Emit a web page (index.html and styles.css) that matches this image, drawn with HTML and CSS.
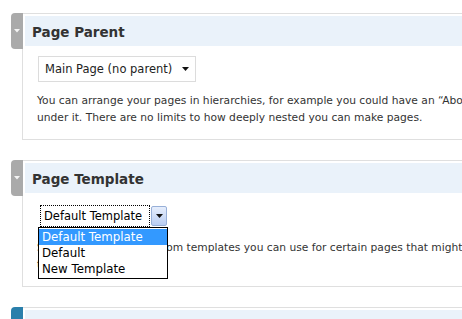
FILE: index.html
```html
<!DOCTYPE html>
<html>
<head>
<meta charset="utf-8">
<link rel="stylesheet" href="styles.css">
</head>
<body>
<div class="page">
  <div class="postbox">
    <div class="tab"><svg width="6" height="4" viewBox="0 0 6 4"><path d="M0 0H6L3 3.5Z" fill="#f4f4f4"/></svg></div>
    <h3>Page Parent</h3>
    <div class="inside">
      <div class="field">
        <div class="select">
          <span>Main Page (no parent)</span>
          <svg width="7" height="4" viewBox="0 0 7 4"><path d="M0 0H7L3.5 4Z" fill="#111"/></svg>
        </div>
      </div>
      <p>You can arrange your pages in hierarchies, for example you could have an “About” page that has “Life Story” and “My Dog” pages<br>under it. There are no limits to how deeply nested you can make pages.</p>
    </div>
  </div>

  <div class="postbox">
    <div class="tab"><svg width="6" height="4" viewBox="0 0 6 4"><path d="M0 0H6L3 3.5Z" fill="#f4f4f4"/></svg></div>
    <h3>Page Template</h3>
    <div class="inside">
      <div class="field">
        <div class="combo">
          <span class="combo-text">Default Template</span>
          <span class="combo-btn"><svg width="7" height="4" viewBox="0 0 7 4"><path d="M0 0H7L3.5 4Z" fill="#111"/></svg></span>
          <div class="list">
            <div class="item active">Default Template</div>
            <div class="item">Default</div>
            <div class="item">New Template</div>
          </div>
        </div>
      </div>
      <p>Some themes have custom templates you can use for certain pages that might have additional features or custom layouts. If so, you’ll see<br>them above.</p>
    </div>
  </div>

  <div class="postbox third">
    <div class="tab"></div>
    <h3>&nbsp;</h3>
    <div class="inside"></div>
  </div>
</div>
</body>
</html>
```

FILE: styles.css
```css
html, body {
  margin: 0;
  padding: 0;
  overflow: hidden;
  background: #fff;
}
body {
  font-family: "DejaVu Sans", sans-serif;
  color: #333;
}
.page {
  width: 1100px;
  padding-top: 13px;
  display: flex;
  flex-direction: column;
  gap: 20px;
}
.postbox {
  position: relative;
  margin-left: 22px;
  border: 1px solid #dfdfdf;
  border-right: 0;
}
.postbox h3 {
  margin: 2px;
  height: 30px;
  box-sizing: border-box;
  background: #eaf2fa;
  font-size: 13.5px;
  font-weight: bold;
  color: #333;
  padding: 2px 0 0 7px;
  display: flex;
  align-items: center;
}
.tab {
  position: absolute;
  left: -12px;
  top: -1px;
  width: 12px;
  height: 36px;
  background: #aaaaaa;
  border-radius: 4px 0 0 4px;
  display: flex;
  align-items: center;
  justify-content: center;
}
.third .tab {
  background: #2a7fab;
}
.inside {
  padding: 8px 0 13px 15px;
}
.third .inside {
  height: 60px;
}
.field {
  height: 26px;
  display: flex;
  align-items: center;
}
.select {
  height: 26px;
  width: 158px;
  box-sizing: border-box;
  border: 1px solid #dcdcdc;
  background: #fff;
  display: flex;
  align-items: center;
  justify-content: space-between;
  padding: 0 6px 0 6px;
  font-size: 11.5px;
  color: #222;
}
.combo {
  position: relative;
  margin-left: 2px;
  width: 127px;
  height: 22px;
  box-sizing: border-box;
  display: flex;
  font-size: 11.5px;
  color: #000;
}
.combo-text {
  flex: 1;
  border: 1px dotted #000;
  display: flex;
  align-items: center;
  padding-left: 3px;
}
.combo-btn {
  width: 16px;
  margin: 1px 0 1px 1px;
  box-sizing: border-box;
  border: 1px solid #98b0d8;
  border-radius: 2px;
  background: linear-gradient(#e6eefc, #b9cdf2);
  display: flex;
  align-items: center;
  justify-content: center;
}
.list {
  position: absolute;
  top: 100%;
  left: -2px;
  width: 130px;
  box-sizing: border-box;
  border: 1px solid #000;
  background: #fff;
  padding: 1px 0 1px;
  font-size: 11.8px;
}
.item {
  height: 16px;
  line-height: 16px;
  padding-left: 3px;
  color: #000;
}
.item.active {
  background: #3399ff;
  color: #fff;
}
p {
  margin: 10px 0 0 -1px;
  font-size: 10.7px;
  line-height: 17px;
  white-space: nowrap;
}
```
